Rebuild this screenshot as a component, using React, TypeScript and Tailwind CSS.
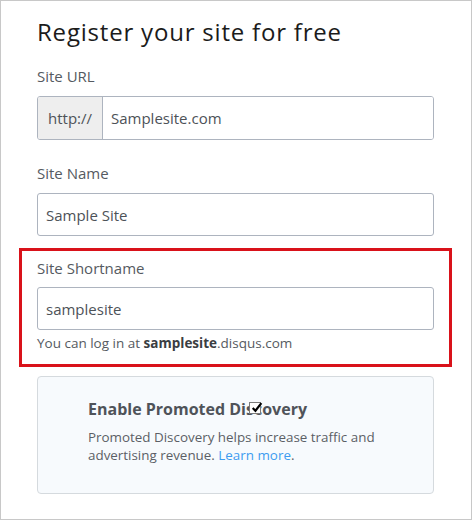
import React from 'react';

const font = { fontFamily: '"Open Sans", "Liberation Sans", sans-serif' };

const Label = ({ children }: { children: React.ReactNode }) => (
  <label className="block text-[15px] leading-[20px] text-[#555a61]">{children}</label>
);

export default function App() {
  return (
    <div
      className="w-[472px] h-[520px] border border-[#c8c8c8] bg-white pl-[36px] pr-[37px] pt-[15px]"
      style={font}
    >
      <h1 className="text-[24px] leading-[32px] text-[#1b1b1b] font-normal tracking-[0.8px]">
        Register your site for free
      </h1>

      {/* Site URL */}
      <div className="mt-[18px]">
        <Label>Site URL</Label>
        <div className="mt-[10px] flex h-[44px] rounded-[3px] border border-[#adb4bf] overflow-hidden">
          <span className="flex items-center justify-center w-[65px] bg-[#eeeeee] border-r border-[#adb4bf] text-[15px] text-[#4d5258]">
            http://
          </span>
          <input
            readOnly
            value="Samplesite.com"
            className="flex-1 px-[8px] text-[15px] text-[#4d5258] outline-none bg-white"
          />
        </div>
      </div>

      {/* Site Name */}
      <div className="mt-[23px]">
        <Label>Site Name</Label>
        <input
          readOnly
          value="Sample Site"
          className="mt-[10px] block w-full h-[43px] rounded-[3px] border border-[#adb4bf] px-[8px] text-[15px] text-[#4d5258] outline-none"
        />
      </div>

      {/* Site Shortname, highlighted */}
      <div className="mt-[12px] -mx-[18px] border-[3px] border-[#d9121a] px-[15px] pt-[7px] pb-[12px]">
        <Label>Site Shortname</Label>
        <input
          readOnly
          value="samplesite"
          className="mt-[9px] block w-full h-[43px] rounded-[3px] border border-[#adb4bf] px-[8px] text-[15px] text-[#4d5258] outline-none"
        />
        <p className="mt-[4px] text-[13.5px] leading-[18px] text-[#555a61]">
          You can log in at <b className="font-bold text-[#3a3d42]">samplesite</b>.disqus.com
        </p>
      </div>

      {/* Promoted Discovery */}
      <div className="relative mt-[9px] h-[118px] rounded-[4px] border border-[#d5dade] bg-[#f7fafd] pl-[50px] pt-[21px]">
        <h2 className="text-[16px] leading-[22px] font-bold text-[#4f5359]">Enable Promoted Discovery</h2>
        <span className="absolute left-[211px] top-[25px] w-[12px] h-[12px] border border-[#7a7a7a] bg-white">
          <svg viewBox="0 0 12 12" className="absolute -top-[2px] left-[0px] w-[13px] h-[13px]">
            <path d="M2.5 6.5 L5 9 L10.5 2" fill="none" stroke="#000" strokeWidth="2" />
          </svg>
        </span>
        <p className="mt-[8px] w-[292px] text-[13.4px] leading-[18px] text-[#5b5f66]">
          Promoted Discovery helps increase traffic and advertising revenue.{' '}
          <a className="text-[#3d9cf0]">Learn more</a>.
        </p>
      </div>
    </div>
  );
}
